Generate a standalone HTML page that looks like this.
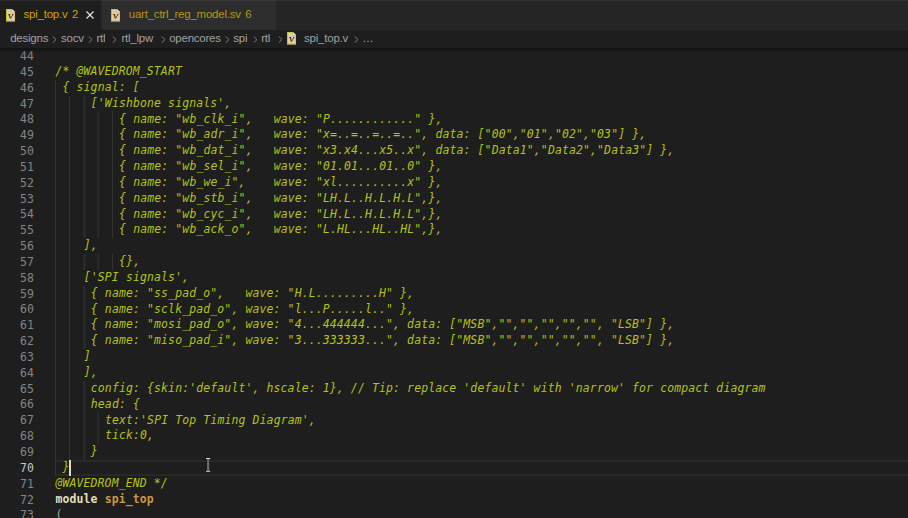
<!DOCTYPE html>
<html>
<head>
<meta charset="utf-8">
<title>spi_top.v</title>
<style>
html,body{margin:0;padding:0;}
body{width:908px;height:518px;overflow:hidden;background:#1e1e1e;position:relative;font-family:"Liberation Sans",sans-serif;}
#tabs{position:absolute;left:0;top:0;width:908px;height:30px;background:#252526;}
#tabs .t1{position:absolute;left:0;top:0;width:102px;height:30px;background:linear-gradient(90deg,#1e1e1e 101px,#262626 101px);}
#tabs .t2{position:absolute;left:102px;top:0;width:174px;height:30px;background:#2d2d2d;}
#topline{position:absolute;left:0;top:0;width:908px;height:1px;background:rgba(255,255,255,0.045);}
.tl{position:absolute;top:6px;font-size:11.44px;line-height:16px;letter-spacing:-0.2px;white-space:nowrap;color:#cca700;}
.x{position:absolute;left:86px;top:11px;width:8px;height:8px;}
#bc{position:absolute;left:0;top:30px;width:908px;height:17px;background:#1e1e1e;}
#bc span{position:absolute;top:0;font-size:11.44px;line-height:16px;letter-spacing:-0.2px;color:#a2a2a2;white-space:nowrap;}
#bc svg{position:absolute;top:5.8px;width:4.8px;height:7.2px;}
#shadow{position:absolute;left:0;top:48px;width:908px;height:5px;background:linear-gradient(#121212,rgba(30,30,30,0));}
.fi{position:absolute;}
.ln{position:absolute;left:20px;width:14px;height:16px;font:11.44px/16px "DejaVu Sans Mono","Liberation Mono",monospace;letter-spacing:0.153px;color:#858585;white-space:pre;}
.ln.cur{color:#c6c6c6;}
.cl{position:absolute;height:16px;font:italic 11.44px/16px "DejaVu Sans Mono","Liberation Mono",monospace;letter-spacing:0.143px;white-space:pre;}
.cm{color:#b4c21b;}
.kw{color:#e6dcba;font-style:normal;font-weight:bold;}
.ty{color:#cc9844;font-style:normal;font-weight:bold;}
.pl{color:#aca48c;font-style:normal;}
.g{position:absolute;width:1px;background:#363636;}
.g3{width:2px;background:#2b2e2e;}
#hl{position:absolute;left:56px;top:460px;width:852px;height:12px;border-top:2px solid #282828;border-bottom:2px solid #282828;}
#cursor{position:absolute;left:69.3px;top:460px;width:1.8px;height:16px;background:#e8dcb8;}
</style>
</head>
<body>
<div id="tabs"><div class="t1"></div><div class="t2"></div></div>
<div id="topline"></div>
<svg class="fi" style="left:5.8px;top:9px" width="9.4" height="12.5" viewBox="0 0 9.4 12.5"><path d="M0 0H5.8L9.4 3.4V12.5H0Z" fill="#d9d0aa"/><path d="M0 0H1V12.5H0ZM0 0H5.8V0.7H0ZM8.5 3.6H9.4V12.5H8.5Z" fill="#b9c81c"/><path d="M0 11.8H9.4V12.5H0Z" fill="#b08c34"/><path d="M5.8 0L9.4 3.4H5.8Z" fill="#f4f0e0"/><path d="M5.8 0V3.4H9.4" fill="none" stroke="#c09a30" stroke-width="0.6"/><path d="M2.1 5.1H4.3V5.8H4L4.8 9.1L4.6 9.6H3.8L2.6 5.8H2.1ZM6 5.1H7.6V5.8H7.2L5 9.4L4.4 9L6.4 5.8H6Z" fill="#6a3008"/></svg>
<div class="tl" style="left:23.5px">spi_top.v<span style="margin-left:4.5px">2</span></div>
<svg class="x" viewBox="0 0 8 8"><path d="M0.5 0.5L7.5 7.5M7.5 0.5L0.5 7.5" stroke="#e8e2cc" stroke-width="1.2" fill="none"/></svg>
<svg class="fi" style="left:110.9px;top:9px" width="9.4" height="12.5" viewBox="0 0 9.4 12.5"><path d="M0 0H5.8L9.4 3.4V12.5H0Z" fill="#d9d0aa"/><path d="M0 0H1V12.5H0ZM0 0H5.8V0.7H0ZM8.5 3.6H9.4V12.5H8.5Z" fill="#b9c81c"/><path d="M0 11.8H9.4V12.5H0Z" fill="#b08c34"/><path d="M5.8 0L9.4 3.4H5.8Z" fill="#f4f0e0"/><path d="M5.8 0V3.4H9.4" fill="none" stroke="#c09a30" stroke-width="0.6"/><path d="M2.1 5.1H4.3V5.8H4L4.8 9.1L4.6 9.6H3.8L2.6 5.8H2.1ZM6 5.1H7.6V5.8H7.2L5 9.4L4.4 9L6.4 5.8H6Z" fill="#6a3008"/></svg>
<div class="tl" style="left:128.8px;color:#b39a12">uart_ctrl_reg_model.sv<span style="margin-left:4.4px">6</span></div>
<div id="bc">
<span style="left:10.2px">designs</span>
<span style="left:61.1px">socv</span>
<span style="left:96.5px">rtl</span>
<span style="left:121.4px">rtl_lpw</span>
<span style="left:169.2px">opencores</span>
<span style="left:233.3px">spi</span>
<span style="left:261.2px">rtl</span>
<span style="left:304.1px">spi_top.v</span>
<span style="left:362.3px">…</span>
<svg style="left:52.3px" viewBox="0 0 5 8"><path d="M0.6 0.5L4.3 4L0.6 7.5" fill="none" stroke="#888888" stroke-width="1"/></svg>
<svg style="left:87.6px" viewBox="0 0 5 8"><path d="M0.6 0.5L4.3 4L0.6 7.5" fill="none" stroke="#888888" stroke-width="1"/></svg>
<svg style="left:112.4px" viewBox="0 0 5 8"><path d="M0.6 0.5L4.3 4L0.6 7.5" fill="none" stroke="#888888" stroke-width="1"/></svg>
<svg style="left:160.5px" viewBox="0 0 5 8"><path d="M0.6 0.5L4.3 4L0.6 7.5" fill="none" stroke="#888888" stroke-width="1"/></svg>
<svg style="left:225.2px" viewBox="0 0 5 8"><path d="M0.6 0.5L4.3 4L0.6 7.5" fill="none" stroke="#888888" stroke-width="1"/></svg>
<svg style="left:252.8px" viewBox="0 0 5 8"><path d="M0.6 0.5L4.3 4L0.6 7.5" fill="none" stroke="#888888" stroke-width="1"/></svg>
<svg style="left:277.5px" viewBox="0 0 5 8"><path d="M0.6 0.5L4.3 4L0.6 7.5" fill="none" stroke="#888888" stroke-width="1"/></svg>
<svg style="left:354.0px" viewBox="0 0 5 8"><path d="M0.6 0.5L4.3 4L0.6 7.5" fill="none" stroke="#888888" stroke-width="1"/></svg>
</div>
<svg class="fi" style="left:287px;top:32.2px" width="9.4" height="12.5" viewBox="0 0 9.4 12.5"><path d="M0 0H5.8L9.4 3.4V12.5H0Z" fill="#d9d0aa"/><path d="M0 0H1V12.5H0ZM0 0H5.8V0.7H0ZM8.5 3.6H9.4V12.5H8.5Z" fill="#b9c81c"/><path d="M0 11.8H9.4V12.5H0Z" fill="#b08c34"/><path d="M5.8 0L9.4 3.4H5.8Z" fill="#f4f0e0"/><path d="M5.8 0V3.4H9.4" fill="none" stroke="#c09a30" stroke-width="0.6"/><path d="M2.1 5.1H4.3V5.8H4L4.8 9.1L4.6 9.6H3.8L2.6 5.8H2.1ZM6 5.1H7.6V5.8H7.2L5 9.4L4.4 9L6.4 5.8H6Z" fill="#6a3008"/></svg>
<div id="hl"></div>
<div class="ln" style="top:48px">44</div>
<div class="ln" style="top:64px">45</div>
<div class="cl cm" style="top:63px;left:55.43px">/* @WAVEDROM_START</div>
<div class="ln" style="top:80px">46</div>
<i class="g" style="left:54px;top:80px;height:16px;transform:translateX(0.90px)"></i>
<div class="cl cm" style="top:79px;left:62.51px">{ signal: [</div>
<div class="ln" style="top:96px">47</div>
<i class="g" style="left:54px;top:96px;height:15px;transform:translateX(0.90px)"></i>
<i class="g" style="left:69px;top:96px;height:15px;transform:translateX(0.15px)"></i>
<i class="g g3" style="left:83px;top:96px;height:15px;transform:translateX(0.40px)"></i>
<div class="cl cm" style="top:95px;left:90.81px">['Wishbone signals',</div>
<div class="ln" style="top:111px">48</div>
<i class="g" style="left:54px;top:111px;height:16px;transform:translateX(0.90px)"></i>
<i class="g" style="left:69px;top:111px;height:16px;transform:translateX(0.15px)"></i>
<i class="g g3" style="left:83px;top:111px;height:16px;transform:translateX(0.40px)"></i>
<i class="g" style="left:97px;top:111px;height:16px;transform:translateX(0.65px)"></i>
<i class="g" style="left:111px;top:111px;height:16px;transform:translateX(0.90px)"></i>
<div class="cl cm" style="top:111px;left:119.11px">{ name: "wb_clk_i",   wave: "P............" },</div>
<div class="ln" style="top:127px">49</div>
<i class="g" style="left:54px;top:127px;height:16px;transform:translateX(0.90px)"></i>
<i class="g" style="left:69px;top:127px;height:16px;transform:translateX(0.15px)"></i>
<i class="g g3" style="left:83px;top:127px;height:16px;transform:translateX(0.40px)"></i>
<i class="g" style="left:97px;top:127px;height:16px;transform:translateX(0.65px)"></i>
<i class="g" style="left:111px;top:127px;height:16px;transform:translateX(0.90px)"></i>
<div class="cl cm" style="top:126px;left:119.11px">{ name: "wb_adr_i",   wave: "x=..=..=..=..", data: ["00","01","02","03"] },</div>
<div class="ln" style="top:143px">50</div>
<i class="g" style="left:54px;top:143px;height:16px;transform:translateX(0.90px)"></i>
<i class="g" style="left:69px;top:143px;height:16px;transform:translateX(0.15px)"></i>
<i class="g g3" style="left:83px;top:143px;height:16px;transform:translateX(0.40px)"></i>
<i class="g" style="left:97px;top:143px;height:16px;transform:translateX(0.65px)"></i>
<i class="g" style="left:111px;top:143px;height:16px;transform:translateX(0.90px)"></i>
<div class="cl cm" style="top:142px;left:119.11px">{ name: "wb_dat_i",   wave: "x3.x4...x5..x", data: ["Data1","Data2","Data3"] },</div>
<div class="ln" style="top:159px">51</div>
<i class="g" style="left:54px;top:159px;height:16px;transform:translateX(0.90px)"></i>
<i class="g" style="left:69px;top:159px;height:16px;transform:translateX(0.15px)"></i>
<i class="g g3" style="left:83px;top:159px;height:16px;transform:translateX(0.40px)"></i>
<i class="g" style="left:97px;top:159px;height:16px;transform:translateX(0.65px)"></i>
<i class="g" style="left:111px;top:159px;height:16px;transform:translateX(0.90px)"></i>
<div class="cl cm" style="top:158px;left:119.11px">{ name: "wb_sel_i",   wave: "01.01...01..0" },</div>
<div class="ln" style="top:175px">52</div>
<i class="g" style="left:54px;top:175px;height:16px;transform:translateX(0.90px)"></i>
<i class="g" style="left:69px;top:175px;height:16px;transform:translateX(0.15px)"></i>
<i class="g g3" style="left:83px;top:175px;height:16px;transform:translateX(0.40px)"></i>
<i class="g" style="left:97px;top:175px;height:16px;transform:translateX(0.65px)"></i>
<i class="g" style="left:111px;top:175px;height:16px;transform:translateX(0.90px)"></i>
<div class="cl cm" style="top:174px;left:119.11px">{ name: "wb_we_i",    wave: "xl..........x" },</div>
<div class="ln" style="top:191px">53</div>
<i class="g" style="left:54px;top:191px;height:15px;transform:translateX(0.90px)"></i>
<i class="g" style="left:69px;top:191px;height:15px;transform:translateX(0.15px)"></i>
<i class="g g3" style="left:83px;top:191px;height:15px;transform:translateX(0.40px)"></i>
<i class="g" style="left:97px;top:191px;height:15px;transform:translateX(0.65px)"></i>
<i class="g" style="left:111px;top:191px;height:15px;transform:translateX(0.90px)"></i>
<div class="cl cm" style="top:190px;left:119.11px">{ name: "wb_stb_i",   wave: "LH.L..H.L.H.L",},</div>
<div class="ln" style="top:206px">54</div>
<i class="g" style="left:54px;top:206px;height:16px;transform:translateX(0.90px)"></i>
<i class="g" style="left:69px;top:206px;height:16px;transform:translateX(0.15px)"></i>
<i class="g g3" style="left:83px;top:206px;height:16px;transform:translateX(0.40px)"></i>
<i class="g" style="left:97px;top:206px;height:16px;transform:translateX(0.65px)"></i>
<i class="g" style="left:111px;top:206px;height:16px;transform:translateX(0.90px)"></i>
<div class="cl cm" style="top:206px;left:119.11px">{ name: "wb_cyc_i",   wave: "LH.L..H.L.H.L",},</div>
<div class="ln" style="top:222px">55</div>
<i class="g" style="left:54px;top:222px;height:16px;transform:translateX(0.90px)"></i>
<i class="g" style="left:69px;top:222px;height:16px;transform:translateX(0.15px)"></i>
<i class="g g3" style="left:83px;top:222px;height:16px;transform:translateX(0.40px)"></i>
<i class="g" style="left:97px;top:222px;height:16px;transform:translateX(0.65px)"></i>
<i class="g" style="left:111px;top:222px;height:16px;transform:translateX(0.90px)"></i>
<div class="cl cm" style="top:221px;left:119.11px">{ name: "wb_ack_o",   wave: "L.HL...HL..HL",},</div>
<div class="ln" style="top:238px">56</div>
<i class="g" style="left:54px;top:238px;height:16px;transform:translateX(0.90px)"></i>
<i class="g" style="left:69px;top:238px;height:16px;transform:translateX(0.15px)"></i>
<div class="cl cm" style="top:237px;left:83.73px">],</div>
<div class="ln" style="top:254px">57</div>
<i class="g" style="left:54px;top:254px;height:16px;transform:translateX(0.90px)"></i>
<i class="g" style="left:69px;top:254px;height:16px;transform:translateX(0.15px)"></i>
<i class="g g3" style="left:83px;top:254px;height:16px;transform:translateX(0.40px)"></i>
<i class="g" style="left:97px;top:254px;height:16px;transform:translateX(0.65px)"></i>
<i class="g" style="left:111px;top:254px;height:16px;transform:translateX(0.90px)"></i>
<div class="cl cm" style="top:253px;left:119.11px">{},</div>
<div class="ln" style="top:270px">58</div>
<i class="g" style="left:54px;top:270px;height:16px;transform:translateX(0.90px)"></i>
<i class="g" style="left:69px;top:270px;height:16px;transform:translateX(0.15px)"></i>
<div class="cl cm" style="top:269px;left:83.73px">['SPI signals',</div>
<div class="ln" style="top:286px">59</div>
<i class="g" style="left:54px;top:286px;height:15px;transform:translateX(0.90px)"></i>
<i class="g" style="left:69px;top:286px;height:15px;transform:translateX(0.15px)"></i>
<i class="g g3" style="left:83px;top:286px;height:15px;transform:translateX(0.40px)"></i>
<div class="cl cm" style="top:285px;left:90.81px">{ name: "ss_pad_o",   wave: "H.L.........H" },</div>
<div class="ln" style="top:301px">60</div>
<i class="g" style="left:54px;top:301px;height:16px;transform:translateX(0.90px)"></i>
<i class="g" style="left:69px;top:301px;height:16px;transform:translateX(0.15px)"></i>
<i class="g g3" style="left:83px;top:301px;height:16px;transform:translateX(0.40px)"></i>
<div class="cl cm" style="top:301px;left:90.81px">{ name: "sclk_pad_o", wave: "l...P.....l.." },</div>
<div class="ln" style="top:317px">61</div>
<i class="g" style="left:54px;top:317px;height:16px;transform:translateX(0.90px)"></i>
<i class="g" style="left:69px;top:317px;height:16px;transform:translateX(0.15px)"></i>
<i class="g g3" style="left:83px;top:317px;height:16px;transform:translateX(0.40px)"></i>
<div class="cl cm" style="top:316px;left:90.81px">{ name: "mosi_pad_o", wave: "4...444444...", data: ["MSB","","","","","", "LSB"] },</div>
<div class="ln" style="top:333px">62</div>
<i class="g" style="left:54px;top:333px;height:16px;transform:translateX(0.90px)"></i>
<i class="g" style="left:69px;top:333px;height:16px;transform:translateX(0.15px)"></i>
<i class="g g3" style="left:83px;top:333px;height:16px;transform:translateX(0.40px)"></i>
<div class="cl cm" style="top:332px;left:90.81px">{ name: "miso_pad_i", wave: "3...333333...", data: ["MSB","","","","","", "LSB"] },</div>
<div class="ln" style="top:349px">63</div>
<i class="g" style="left:54px;top:349px;height:16px;transform:translateX(0.90px)"></i>
<i class="g" style="left:69px;top:349px;height:16px;transform:translateX(0.15px)"></i>
<div class="cl cm" style="top:348px;left:83.73px">]</div>
<div class="ln" style="top:365px">64</div>
<i class="g" style="left:54px;top:365px;height:16px;transform:translateX(0.90px)"></i>
<i class="g" style="left:69px;top:365px;height:16px;transform:translateX(0.15px)"></i>
<div class="cl cm" style="top:364px;left:83.73px">],</div>
<div class="ln" style="top:381px">65</div>
<i class="g" style="left:54px;top:381px;height:15px;transform:translateX(0.90px)"></i>
<i class="g" style="left:69px;top:381px;height:15px;transform:translateX(0.15px)"></i>
<i class="g g3" style="left:83px;top:381px;height:15px;transform:translateX(0.40px)"></i>
<div class="cl cm" style="top:380px;left:90.81px">config: {skin:'default', hscale: 1}, // Tip: replace 'default' with 'narrow' for compact diagram</div>
<div class="ln" style="top:396px">66</div>
<i class="g" style="left:54px;top:396px;height:16px;transform:translateX(0.90px)"></i>
<i class="g" style="left:69px;top:396px;height:16px;transform:translateX(0.15px)"></i>
<i class="g g3" style="left:83px;top:396px;height:16px;transform:translateX(0.40px)"></i>
<div class="cl cm" style="top:396px;left:90.81px">head: {</div>
<div class="ln" style="top:412px">67</div>
<i class="g" style="left:54px;top:412px;height:16px;transform:translateX(0.90px)"></i>
<i class="g" style="left:69px;top:412px;height:16px;transform:translateX(0.15px)"></i>
<i class="g g3" style="left:83px;top:412px;height:16px;transform:translateX(0.40px)"></i>
<i class="g" style="left:97px;top:412px;height:16px;transform:translateX(0.65px)"></i>
<div class="cl cm" style="top:412px;left:104.95px">text:'SPI Top Timing Diagram',</div>
<div class="ln" style="top:428px">68</div>
<i class="g" style="left:54px;top:428px;height:16px;transform:translateX(0.90px)"></i>
<i class="g" style="left:69px;top:428px;height:16px;transform:translateX(0.15px)"></i>
<i class="g g3" style="left:83px;top:428px;height:16px;transform:translateX(0.40px)"></i>
<i class="g" style="left:97px;top:428px;height:16px;transform:translateX(0.65px)"></i>
<div class="cl cm" style="top:427px;left:104.95px">tick:0,</div>
<div class="ln" style="top:444px">69</div>
<i class="g" style="left:54px;top:444px;height:16px;transform:translateX(0.90px)"></i>
<i class="g" style="left:69px;top:444px;height:16px;transform:translateX(0.15px)"></i>
<i class="g g3" style="left:83px;top:444px;height:16px;transform:translateX(0.40px)"></i>
<div class="cl cm" style="top:443px;left:90.81px">}</div>
<div class="ln cur" style="top:460px">70</div>
<i class="g" style="left:54px;top:460px;height:16px;transform:translateX(0.90px)"></i>
<div class="cl cm" style="top:459px;left:62.51px">}</div>
<div class="ln" style="top:476px">71</div>
<div class="cl cm" style="top:475px;left:55.43px">@WAVEDROM_END */</div>
<div class="ln" style="top:492px">72</div>
<div class="cl" style="top:491px;left:55.43px"><b class="kw">module</b> <span class="ty">spi_top</span></div>
<div class="ln" style="top:507px">73</div>
<div class="cl pl" style="top:507px;left:55.43px">(</div>
<div id="shadow"></div>
<div id="cursor"></div>
<svg class="fi" style="left:204.6px;top:456.6px" width="6.3" height="15.7" viewBox="0 0 6.3 15.7"><path d="M0.5 0.5H5.8V2.3H4.6V13.4H5.8V15.2H0.5V13.4H1.7V2.3H0.5Z" fill="#141414"/><path d="M2.1 2H4.2V13.7H2.1Z" fill="#68727c"/><path d="M1 1H5.3V2H1ZM1 13.7H5.3V14.7H1Z" fill="#e8dcb0"/></svg>
</body>
</html>
